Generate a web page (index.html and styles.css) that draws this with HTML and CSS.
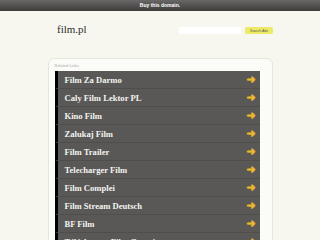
FILE: index.html
```html
<!DOCTYPE html>
<html lang="en">
<head>
<meta charset="UTF-8">
<title>film.pl</title>
<link rel="stylesheet" href="styles.css">
</head>
<body>
<div class="topbar">Buy this domain.</div>
<div class="header">
    <div class="logo">film.pl</div>
    <form class="search">
        <input type="text" class="search-input">
        <button type="button" class="search-btn">Search Ads</button>
    </form>
</div>
<div class="card">
    <div class="card-title">Related Links</div>
    <ul class="links">
        <li class="c1"><a href="#">Film Za Darmo</a><span class="arrow">&#10140;</span></li>
        <li class="c2"><a href="#">Caly Film Lektor PL</a><span class="arrow">&#10140;</span></li>
        <li class="c3"><a href="#">Kino Film</a><span class="arrow">&#10140;</span></li>
        <li class="c4"><a href="#">Zalukaj Film</a><span class="arrow">&#10140;</span></li>
        <li class="c5"><a href="#">Film Trailer</a><span class="arrow">&#10140;</span></li>
        <li class="c1"><a href="#">Telecharger Film</a><span class="arrow">&#10140;</span></li>
        <li class="c2"><a href="#">Film Complei</a><span class="arrow">&#10140;</span></li>
        <li class="c3"><a href="#">Film Stream Deutsch</a><span class="arrow">&#10140;</span></li>
        <li class="c4"><a href="#">BF Film</a><span class="arrow">&#10140;</span></li>
        <li class="c5"><a href="#">Télécharger Film Gratuit</a><span class="arrow">&#10140;</span></li>
    </ul>
</div>
</body>
</html>
```
FILE: styles.css
```css
body {
    margin: 0;
    background-color: #f7f7f0;
    font-family: "Liberation Serif", serif;
    overflow: hidden;
}

.topbar {
    height: 11px;
    line-height: 11px;
    background: linear-gradient(#6a6866, #3e3c3a);
    color: #fff;
    font-family: "Liberation Sans", sans-serif;
    font-size: 5px;
    font-weight: bold;
    text-align: center;
}

.header {
    width: 216px;
    margin-left: calc(50% - 103px);
    height: 47px;
    display: flex;
    justify-content: space-between;
    align-items: flex-start;
}

.logo {
    margin-top: 12px;
    font-size: 11px;
    color: #2c2c2c;
}

.search {
    margin-top: 16px;
    display: flex;
    gap: 4px;
}

.search-input {
    width: 62px;
    height: 7px;
    padding: 0;
    border: none;
    background: #fff;
}

.search-btn {
    height: 7px;
    width: 28px;
    padding: 0;
    border: none;
    border-radius: 2px;
    background: #ecea66;
    color: #555;
    font-family: "Liberation Sans", sans-serif;
    font-size: 3.5px;
}

.card {
    width: 214px;
    margin: 0 auto;
    padding: 3px 3px 0 6px;
    height: 200px;
    background: #fbfbf7;
    border: 1px solid #e6e6de;
    border-radius: 6px;
}

.card-title {
    font-family: "Liberation Sans", sans-serif;
    font-size: 4px;
    color: #aaa;
    height: 9px;
    line-height: 7px;
}

.links {
    list-style: none;
    margin: 0;
    padding: 0;
    width: 205px;
}

.links li {
    height: 17px;
    display: flex;
    align-items: center;
    justify-content: space-between;
    background: #595857;
    border-left: 3px solid;
    border-bottom: 1px solid #4f4e4d;
    padding: 0 4px 0 7px;
}

.links a {
    color: #f4f4f0;
    text-decoration: none;
    font-weight: bold;
    font-size: 8.6px;
}

.arrow {
    color: #ebb92a;
    font-family: "DejaVu Sans", sans-serif;
    font-size: 11px;
    font-weight: bold;
    line-height: 1;
    -webkit-text-stroke: 0.6px #ebb92a;
}

.c1 { border-left-color: #3d7c6e; }
.c2 { border-left-color: #d4df7c; }
.c3 { border-left-color: #e9d56a; }
.c4 { border-left-color: #d28a43; }
.c5 { border-left-color: #1d3a4e; }
```
